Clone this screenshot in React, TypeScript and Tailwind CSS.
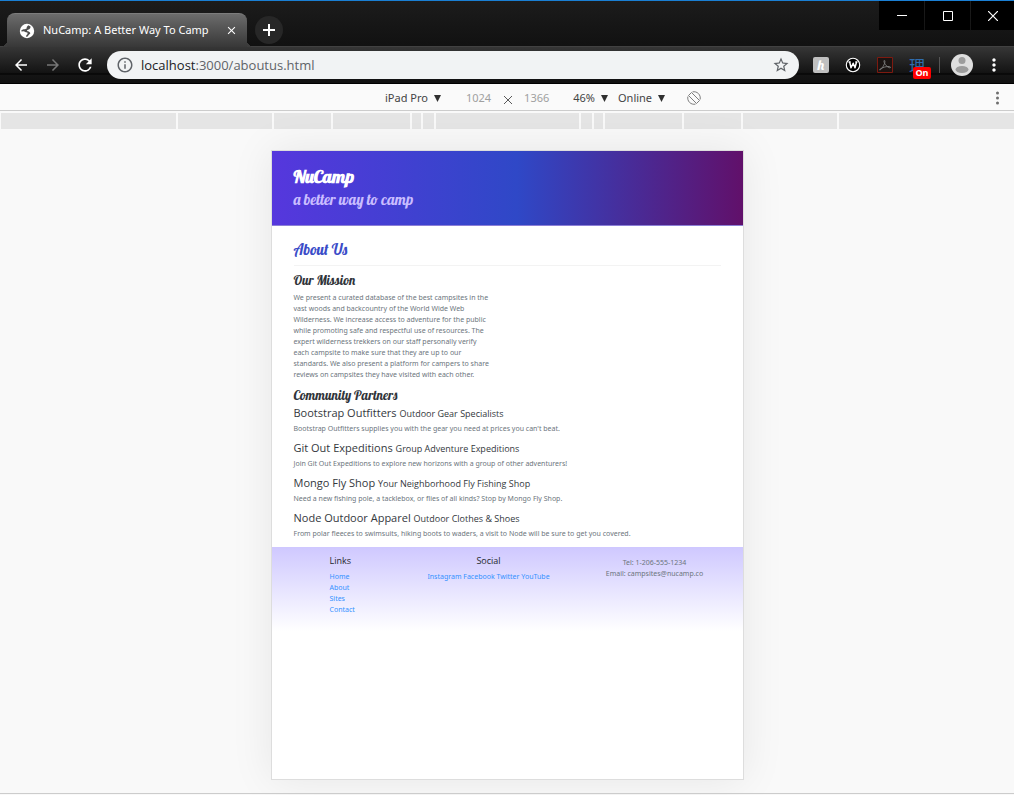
import React from "react";
import { MdClose, MdArrowBack, MdArrowForward, MdRefresh, MdInfoOutline, MdStarBorder, MdMoreVert } from "react-icons/md";

const script = "font-['Lobster','Liberation_Serif',serif]";

const sideBars = ["w-[94px]", "w-[57px]", "w-[77px]", "w-[9px]", "w-[11px]"];

const partners = [
  { name: "Bootstrap Outfitters", tag: "Outdoor Gear Specialists", text: "Bootstrap Outfitters supplies you with the gear you need at prices you can't beat." },
  { name: "Git Out Expeditions", tag: "Group Adventure Expeditions", text: "Join Git Out Expeditions to explore new horizons with a group of other adventurers!" },
  { name: "Mongo Fly Shop", tag: "Your Neighborhood Fly Fishing Shop", text: "Need a new fishing pole, a tacklebox, or flies of all kinds? Stop by Mongo Fly Shop." },
  { name: "Node Outdoor Apparel", tag: "Outdoor Clothes & Shoes", text: "From polar fleeces to swimsuits, hiking boots to waders, a visit to Node will be sure to get you covered." },
];

function Globe() {
  return (
    <svg viewBox="0 0 16 16" className="size-4 shrink-0">
      <circle cx="8" cy="8" r="7.200" fill="#fff" />
      <path d="M9.200 2.300L7.600 4.200 7.900 5.200 6 6.300 4.600 6.200 2.400 7.300 2.500 8.600 4.800 8.300 6.800 9.300 8.400 9.600 8.600 11 7.300 12.300 7.200 13.900 8.600 13.600 9.900 11.800 11.300 10.600 11 9.400 9.700 8.600 8 8.100 8.300 6.900 10.300 6.300 11.300 5 11.600 3.600Z" fill="#4d4d4d" />
    </svg>
  );
}

function TabStrip() {
  return (
    <div className="flex h-[45px] items-start bg-linear-to-b from-[#1c1c1c] to-[#111111]">
      <div className="relative z-10 ml-[7px] mt-[12px] flex h-[34px] w-[240px] items-center rounded-t-lg border-t border-[#7c7c7c] bg-linear-to-b from-[#6c6c6c] to-[#383838] pl-3 pr-2 text-white before:absolute before:-left-[7px] before:bottom-0 before:size-[7px] before:bg-[radial-gradient(circle_at_0_0,transparent_7px,#3c3c3c_7px)] after:absolute after:-right-[7px] after:bottom-0 after:size-[7px] after:bg-[radial-gradient(circle_at_100%_0,transparent_7px,#3c3c3c_7px)]">
        <Globe />
        <span className="ml-2 flex-1 whitespace-nowrap font-['Noto_Sans',sans-serif] text-[11px]">NuCamp: A Better Way To Camp</span>
        <button aria-label="Close tab" className="flex size-4 items-center justify-center">
          <MdClose className="size-[13px]" stroke="currentColor" />
        </button>
      </div>
      <button aria-label="New tab" className="ml-2 mt-[15px] flex size-7 items-center justify-center rounded-full bg-[#272727] text-white">
        <svg viewBox="0 0 12 12" className="size-3" stroke="currentColor" strokeWidth="2"><path d="M6 0v12M0 6h12" /></svg>
      </button>
      <div className="ml-auto flex gap-px text-white">
        <button aria-label="Minimize" className="flex h-[29px] w-[45px] items-center justify-center bg-black">
          <svg viewBox="0 0 10 10" className="size-[10px]" stroke="currentColor"><path d="M0 4.500h10" /></svg>
        </button>
        <button aria-label="Maximize" className="flex h-[29px] w-[45px] items-center justify-center bg-black">
          <svg viewBox="0 0 10 10" className="size-[10px]" fill="none" stroke="currentColor"><path d="M.5.5h9v9h-9z" /></svg>
        </button>
        <button aria-label="Close" className="flex h-[29px] w-[43px] items-center justify-center bg-black">
          <svg viewBox="0 0 10 10" className="size-[10px]" stroke="currentColor" strokeWidth="1.200"><path d="M0 0l10 10M10 0L0 10" /></svg>
        </button>
      </div>
    </div>
  );
}

function Extensions() {
  return (
    <>
      <button aria-label="Honey" className="ml-[14px] flex size-4 items-center justify-center rounded-[2px] bg-[#c0c0c0] font-['Lobster','Liberation_Serif',serif] text-[14px] leading-4 text-white">h</button>
      <button aria-label="W extension" className="ml-4 size-4">
        <svg viewBox="0 0 16 16" fill="none" stroke="#fff">
          <circle cx="8" cy="8" r="6.700" fill="#000" strokeWidth="1.100" />
          <path d="M3.500 5h2.200M4.700 5L6 10.800 8.200 6.200 10 10.800 11.500 5M10.300 5h2.200" strokeWidth="1.500" strokeLinejoin="round" />
        </svg>
      </button>
      <button aria-label="Acrobat" className="ml-4 size-4">
        <svg viewBox="0 0 16 16" fill="none">
          <path d="M.5.5h15v15H.5z" stroke="#7d1a10" fill="#1b1413" />
          <path d="M3 13c1.500-.5 5-6 4.900-8.500C7.900 3 6.800 3 7 4.500 7.300 7 11 11 13 10.800c1.200-.3.300-1.500-2-1.300-2.500.2-5 .8-7.500 2.300C2.300 12.600 2.500 13.200 3 13z" stroke="#808080" strokeWidth=".9" />
        </svg>
      </button>
      <button aria-label="Kanji extension" className="relative ml-4 size-4 font-['Noto_Sans_CJK_JP',sans-serif] text-[16px] leading-4 text-[#2f6cae]">
        理
        <span className="absolute -right-[6px] top-[10px] flex h-3 w-[18px] items-center justify-center rounded-[2px] bg-[#ff0000] font-['Open_Sans',sans-serif] text-[9px] font-bold text-white">On</span>
      </button>
    </>
  );
}

function Toolbar() {
  return (
    <div className="flex h-[38px] items-center border-b border-t border-b-black border-t-[#414141] bg-[linear-gradient(#363636_0px,#131313_26px,#000_27px,#141414_28px,#101010_38px)] pr-[14px] text-white">
      <button aria-label="Back" className="ml-3 flex"><MdArrowBack className="size-[18px]" stroke="currentColor" /></button>
      <button aria-label="Forward" className="ml-[14px] flex text-[#777777]"><MdArrowForward className="size-[18px]" stroke="currentColor" /></button>
      <button aria-label="Reload" className="ml-[13px] flex"><MdRefresh className="size-5" stroke="currentColor" /></button>
      <div className="ml-3 flex h-7 flex-1 items-center rounded-full bg-[#f1f3f4] px-[9px] text-[#5f6368]">
        <MdInfoOutline className="size-[18px] shrink-0" />
        <div className="ml-[7px] flex-1 whitespace-nowrap pt-px text-[13px]"><span className="text-[#202124]">localhost</span>:3000/aboutus.html</div>
        <button aria-label="Bookmark this page" className="flex"><MdStarBorder className="size-[18px]" /></button>
      </div>
      <Extensions />
      <span className="ml-[14px] h-4 w-px bg-[#555555]" />
      <button aria-label="Profile" className="ml-[11px] size-[22px] shrink-0">
        <svg viewBox="0 0 22 22">
          <circle cx="11" cy="11" r="11" fill="#dedede" />
          <circle cx="11" cy="6.500" r="3.500" fill="#9c9c9c" />
          <ellipse cx="11" cy="15.500" rx="6.500" ry="3.500" fill="#9c9c9c" />
        </svg>
      </button>
      <button aria-label="Menu" className="ml-[11px] flex"><MdMoreVert className="-mr-1 size-5" /></button>
    </div>
  );
}

function Triangle() {
  return <svg viewBox="0 0 7 7" className="size-[7px]" fill="#303030"><path d="M0 0h7L3.500 7z" /></svg>;
}

function DeviceBar() {
  return (
    <div className="flex h-[27px] items-center border-b border-[#cccccc] bg-[#fafafa] pl-[385px] pt-[2px] font-['Noto_Sans',sans-serif] text-[11px] text-[#444444]">
      <button className="flex items-center gap-[6px] whitespace-nowrap">iPad Pro <Triangle /></button>
      <span className="ml-[25px] text-[#a0a0a0]">1024</span>
      <svg viewBox="0 0 8 8" className="ml-[13px] mr-3 mt-[3px] size-2" stroke="#5a5a5a"><path d="M0 0l8 8M8 0L0 8" /></svg>
      <span className="text-[#a0a0a0]">1366</span>
      <button className="ml-6 flex items-center gap-[6px]">46% <Triangle /></button>
      <button className="ml-[10px] flex items-center gap-[6px]">Online <Triangle /></button>
      <button aria-label="Rotate" className="ml-[22px] size-[14px]">
        <svg viewBox="0 0 14 14" fill="none" stroke="#6e6e6e" strokeWidth=".9">
          <path d="M4.500 1.500L12.500 9.500 9.500 12.500 1.500 4.500z" strokeLinejoin="round" />
          <path d="M5.500 .9A6.300 6.300 0 0 1 13.100 8.500M8.500 13.100A6.300 6.300 0 0 1 .9 5.500" />
        </svg>
      </button>
      <button aria-label="More options" className="ml-auto mr-[15px] h-[14px] w-[3px]">
        <svg viewBox="0 0 3 14" fill="#6e6e6e"><circle cx="1.500" cy="2" r="1.500" /><circle cx="1.500" cy="7" r="1.500" /><circle cx="1.500" cy="12" r="1.500" /></svg>
      </button>
    </div>
  );
}

function Ruler() {
  return (
    <div className="flex h-[18px] gap-[2px] pl-px pt-[2px]">
      <div className="flex-1 bg-[#e5e5e5]" />
      {sideBars.map((w) => <div key={w} className={w + " bg-[#e5e5e5]"} />)}
      <div className="w-[143px] bg-[#e5e5e5]" />
      {[...sideBars].reverse().map((w) => <div key={w} className={w + " bg-[#e5e5e5]"} />)}
      <div className="flex-1 bg-[#e5e5e5]" />
    </div>
  );
}

function Site() {
  return (
    <div className="mx-auto mt-[21px] flex min-h-[630px] w-[473px] flex-col border border-[#dddddd] bg-white font-['Noto_Sans',sans-serif] text-[7px] leading-[11px] text-[#6c757d] shadow-[0_0_40px_rgba(0,0,0,0.08)]">
      <header className="h-[75px] border-b border-[#8c7fd6] bg-[linear-gradient(90deg,#5637dd,#2f48c7_52%,#61106a)] px-[22px] pt-[14px]">
        <h1 className={script + " text-[18px] font-bold leading-6 text-white"}>NuCamp</h1>
        <h2 className={script + " text-[15px] leading-[22px] text-[#c9bdff]"}>a better way to camp</h2>
      </header>
      <main className="px-[22px] pb-[2px]">
        <h2 className={script + " border-b border-[#f3f3f3] pb-[5px] pt-[13px] text-[15px] leading-[21px] text-[#3a4cc8]"}>About Us</h2>
        <h3 className={script + " mt-1 text-[13px] leading-5 text-[#30343a]"}>Our Mission</h3>
        <p className="mt-[2px] w-[198px]">
          We present a curated database of the best campsites in the vast woods and backcountry of the World Wide Web Wilderness. We increase access to adventure for the public while promoting safe and respectful use of resources. The expert wilderness trekkers on our staff personally verify each campsite to make sure that they are up to our standards. We also present a platform for campers to share reviews on campsites they have visited with each other.
        </p>
        <h3 className={script + " mt-[5px] text-[13px] leading-5 text-[#30343a]"}>Community Partners</h3>
        {partners.map((p) => (
          <section key={p.name} className="mb-[6px]">
            <h4 className="font-['Open_Sans',sans-serif] text-[11px] leading-4 text-[#34383d]">{p.name} <small className="text-[9px] leading-none">{p.tag}</small></h4>
            <p className="mt-[2px]">{p.text}</p>
          </section>
        ))}
      </main>
      <footer className="flex h-[84px] bg-linear-to-b from-[#cfc8ff] to-white pt-[6px]">
        <nav className="ml-[58px] w-[58px] text-[#3391ff]">
          <h5 className="mb-[2px] font-['Open_Sans',sans-serif] text-[9px] leading-4 text-[#25292e]">Links</h5>
          <ul>
            <li><a href="#home">Home</a></li>
            <li><a href="#about">About</a></li>
            <li><a href="#sites">Sites</a></li>
            <li><a href="#contact">Contact</a></li>
          </ul>
        </nav>
        <div className="w-[202px] text-center text-[#3391ff]">
          <h5 className="mb-[2px] font-['Open_Sans',sans-serif] text-[9px] leading-4 text-[#25292e]">Social</h5>
          <a href="#instagram">Instagram</a> <a href="#facebook">Facebook</a> <a href="#twitter">Twitter</a> <a href="#youtube">YouTube</a>
        </div>
        <address className="ml-[14px] w-[102px] whitespace-nowrap pt-[4px] text-center not-italic">
          Tel: 1-206-555-1234<br />Email: campsites@nucamp.co
        </address>
      </footer>
    </div>
  );
}

export default function App() {
  return (
    <div className="flex min-h-screen flex-col border-t border-[#1a7fd4] bg-[#f9f9f9] font-['Open_Sans','Noto_Sans',sans-serif]">
      <TabStrip />
      <Toolbar />
      <DeviceBar />
      <Ruler />
      <Site />
      <div className="mt-[13px] border-t border-[#cccccc]" />
    </div>
  );
}
